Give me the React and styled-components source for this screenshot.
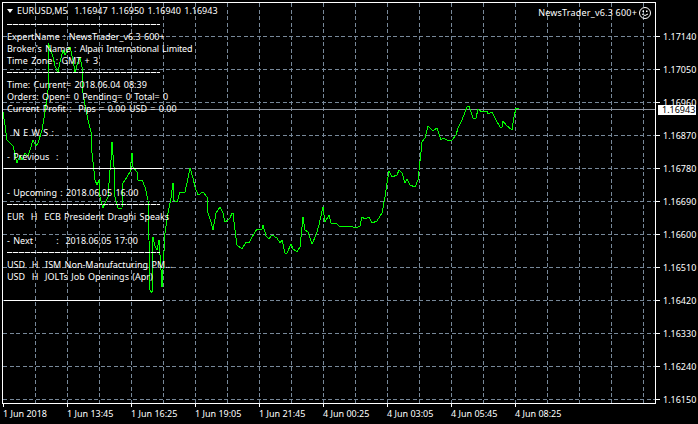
import React from 'react';
import styled, { createGlobalStyle } from 'styled-components';

const PRICES = ['1.17140', '1.17050', '1.16960', '1.16870', '1.16780', '1.16690', '1.16600', '1.16510', '1.16420', '1.16330', '1.16240', '1.16150'];
const TIMES = ['1 Jun 2018', '1 Jun 13:45', '1 Jun 16:25', '1 Jun 19:05', '1 Jun 21:45', '4 Jun 00:25', '4 Jun 03:05', '4 Jun 05:45', '4 Jun 08:25'];

const LINE = [
  [3, 112], [5, 125], [7, 140], [10, 143], [13, 146], [17, 163], [20, 155], [22, 160], [25, 153], [28, 156], [30, 150], [33, 140], [36, 146], [38, 143], [42, 130], [45, 112], [48, 90], [48, 43], [50, 48], [53, 57], [55, 66], [58, 73], [60, 62], [63, 50], [65, 55], [68, 50], [70, 47], [73, 60], [75, 72], [78, 62], [80, 57], [82, 67], [83, 93], [85, 105], [88, 120], [91, 132], [92, 153], [95, 180], [97, 185], [99, 180], [100, 197], [103, 208], [105, 203], [108, 197], [110, 170], [111, 160], [112, 142], [113, 155], [114, 167], [115, 197], [118, 208], [122, 208], [123, 183], [127, 177], [130, 172], [132, 153], [133, 167], [137, 172], [138, 180], [142, 180], [145, 187], [148, 200], [149, 240], [150, 290], [152, 293], [153, 237], [155, 246], [157, 250], [159, 240], [161, 270], [162, 287], [165, 233], [168, 213], [171, 198], [173, 183], [173, 200], [177, 202], [180, 192], [185, 192], [188, 178], [190, 168], [193, 178], [195, 187], [198, 195], [203, 192], [207, 197], [208, 213], [211, 222], [213, 230], [216, 213], [220, 207], [223, 213], [225, 222], [228, 220], [230, 218], [232, 213], [233, 213], [235, 230], [237, 245], [242, 249], [246, 242], [249, 243], [252, 237], [257, 229], [262, 229], [263, 225], [266, 236], [269, 239], [272, 235], [277, 238], [280, 243], [282, 240], [285, 253], [287, 253], [291, 244], [293, 249], [297, 252], [300, 247], [303, 217], [305, 230], [308, 232], [312, 244], [316, 235], [319, 225], [323, 207], [325, 222], [329, 215], [331, 223], [337, 224], [340, 227], [343, 226], [350, 226], [356, 228], [360, 226], [362, 217], [365, 219], [369, 217], [372, 223], [377, 221], [382, 213], [385, 197], [387, 183], [389, 171], [392, 177], [397, 175], [399, 170], [402, 173], [405, 183], [407, 179], [410, 185], [415, 187], [418, 180], [421, 152], [422, 142], [425, 138], [428, 126], [433, 131], [437, 128], [441, 140], [443, 138], [447, 140], [452, 140], [456, 135], [458, 128], [462, 120], [467, 107], [469, 106], [473, 118], [476, 118], [478, 109], [482, 112], [487, 111], [488, 114], [492, 112], [495, 118], [500, 127], [502, 127], [503, 121], [506, 125], [512, 130], [514, 117], [516, 108], [519, 108],
];

const GlobalStyle = createGlobalStyle`
  html, body {
    margin: 0;
    background: #000;
  }
`;

const Window = styled.div`
  width: 698px;
  height: 424px;
  overflow: hidden;
  background: #000;
  color: #fff;
  font-family: "Noto Sans", sans-serif;
  font-size: 9px;
  display: flex;
  flex-direction: column;
  padding: 2px 0 0 2px;
  box-sizing: border-box;
`;

const MainRow = styled.div`
  display: flex;
  height: 402px;
`;

const Plot = styled.div`
  position: relative;
  width: 654px;
  height: 402px;
  box-sizing: border-box;
  border: 1px solid #fff;
`;

const ChartSvg = styled.svg`
  display: block;
`;

const Symbol = styled.div`
  position: absolute;
  left: 4px;
  top: 0;
  height: 15px;
  display: flex;
  align-items: center;
  gap: 4px;
  white-space: pre;
  word-spacing: 1px;
`;

const Caret = styled.span`
  width: 0;
  height: 0;
  border-left: 3.5px solid transparent;
  border-right: 3.5px solid transparent;
  border-top: 4px solid #fff;
`;

const ExpertLabel = styled.div`
  position: absolute;
  right: 4px;
  top: 2px;
  height: 15px;
  display: flex;
  align-items: center;
  gap: 2px;
  letter-spacing: 0.2px;
`;

const Panel = styled.div`
  position: absolute;
  left: 1px;
  top: 15px;
  width: 190px;
  display: flex;
  flex-direction: column;
`;

const Line = styled.div`
  height: 12px;
  line-height: 13px;
  padding-left: ${(props) => props.$indent || 3}px;
  white-space: pre;
  word-spacing: 1px;
`;

const Tight = styled.span`
  letter-spacing: -0.2px;
`;

const Rule = styled.div`
  height: 12px;
  display: flex;
  align-items: center;
  &::before {
    content: '';
    height: 1px;
    margin-left: ${(props) => (props.$wide ? 0 : 3)}px;
    width: ${(props) => (props.$wide ? 158 : 153)}px;
    background: repeating-linear-gradient(90deg, #fff 0 5px, ${(props) => (props.$wide ? '#fff' : '#555')} 5px 6px);
  }
`;

const PriceAxis = styled.div`
  position: relative;
  display: flex;
  flex-direction: column;
  padding-top: 18px;
`;

const Price = styled.div`
  height: 33px;
  flex-shrink: 0;
  display: flex;
  align-items: center;
  gap: 3px;
  &::before {
    content: '';
    width: 4px;
    height: 1px;
    background: #fff;
  }
`;

const BidTag = styled.div`
  position: absolute;
  left: 2px;
  top: 103px;
  width: 38px;
  height: 10px;
  line-height: 10px;
  padding-left: 4px;
  box-sizing: border-box;
  white-space: nowrap;
  background: #fff;
  color: #000;
`;

const TimeAxis = styled.div`
  display: flex;
  padding-left: 1px;
`;

const TimeLabel = styled.div`
  width: 64px;
  display: flex;
  flex-direction: column;
  white-space: pre;
  line-height: 13px;
  &::before {
    content: '';
    width: 1px;
    height: 3px;
    background: #fff;
  }
`;

const range = (start, step, count) => Array.from({ length: count }, (_, i) => start + step * i);

function PriceChart() {
  return (
    <ChartSvg width="652" height="400" viewBox="3 3 652 400" shapeRendering="crispEdges">
      {range(35, 32, 20).map((x) => (
        <line key={x} x1={x + 0.5} x2={x + 0.5} y1="3" y2="403" stroke="#778899" strokeDasharray="4 2.5" />
      ))}
      {range(36, 33, 12).map((y) => (
        <line key={y} x1="3" x2="655" y1={y + 0.5} y2={y + 0.5} stroke="#778899" strokeDasharray="4 2.5" />
      ))}
      <line x1="3" x2="655" y1="109.5" y2="109.5" stroke="#8f96a0" />
      <polyline points={LINE.map((p) => p.join(',')).join(' ')} fill="none" stroke="#00ff00" strokeWidth="1" />
    </ChartSvg>
  );
}

function Smiley() {
  return (
    <svg width="12" height="12" viewBox="0 0 12 12" fill="none" stroke="#fff">
      <circle cx="6" cy="6" r="5.5" />
      <rect x="3.5" y="3.5" width="1.5" height="1.5" fill="#fff" stroke="none" />
      <rect x="7" y="3.5" width="1.5" height="1.5" fill="#fff" stroke="none" />
      <path d="M3 7 Q6 10 9 7" />
    </svg>
  );
}

export default function App() {
  return (
    <Window>
      <GlobalStyle />
      <MainRow>
        <Plot>
          <PriceChart />
          <Symbol>
            <Caret />
            <span>EURUSD,M5  1.16947 1.16950 1.16940 1.16943</span>
          </Symbol>
          <ExpertLabel>
            <span>NewsTrader_v6.3 600+</span>
            <Smiley />
          </ExpertLabel>
          <Panel>
            <Rule />
            <Line>ExpertName : NewsTrader_v6.3 600+</Line>
            <Line>Broker's Name : <Tight>Alpari International Limited</Tight></Line>
            <Line>Time Zone : GMT + 3</Line>
            <Rule />
            <Line>Time: Current= 2018.06.04 08:39</Line>
            <Line>Orders: Open= 0 Pending= 0 Total= 0</Line>
            <Line>Current Profit :  Pips = 0.00 USD = 0.00</Line>
            <Line />
            <Line $indent={9}>N E W S :</Line>
            <Line />
            <Line>- Previous  :</Line>
            <Rule $wide />
            <Line />
            <Line>- Upcoming : 2018.06.05 16:00</Line>
            <Rule />
            <Line>EUR  H  ECB President Draghi Speaks</Line>
            <Line />
            <Line>- Next       :  2018.06.05 17:00</Line>
            <Rule />
            <Line>USD  H  ISM Non-Manufacturing PM...</Line>
            <Line>USD  H  JOLTs Job Openings (Apr)</Line>
            <Line />
            <Rule $wide />
          </Panel>
        </Plot>
        <PriceAxis>
          {PRICES.map((price) => (
            <Price key={price}>{price}</Price>
          ))}
          <BidTag>1.16943</BidTag>
        </PriceAxis>
      </MainRow>
      <TimeAxis>
        {TIMES.map((time) => (
          <TimeLabel key={time}>{time}</TimeLabel>
        ))}
      </TimeAxis>
    </Window>
  );
}
